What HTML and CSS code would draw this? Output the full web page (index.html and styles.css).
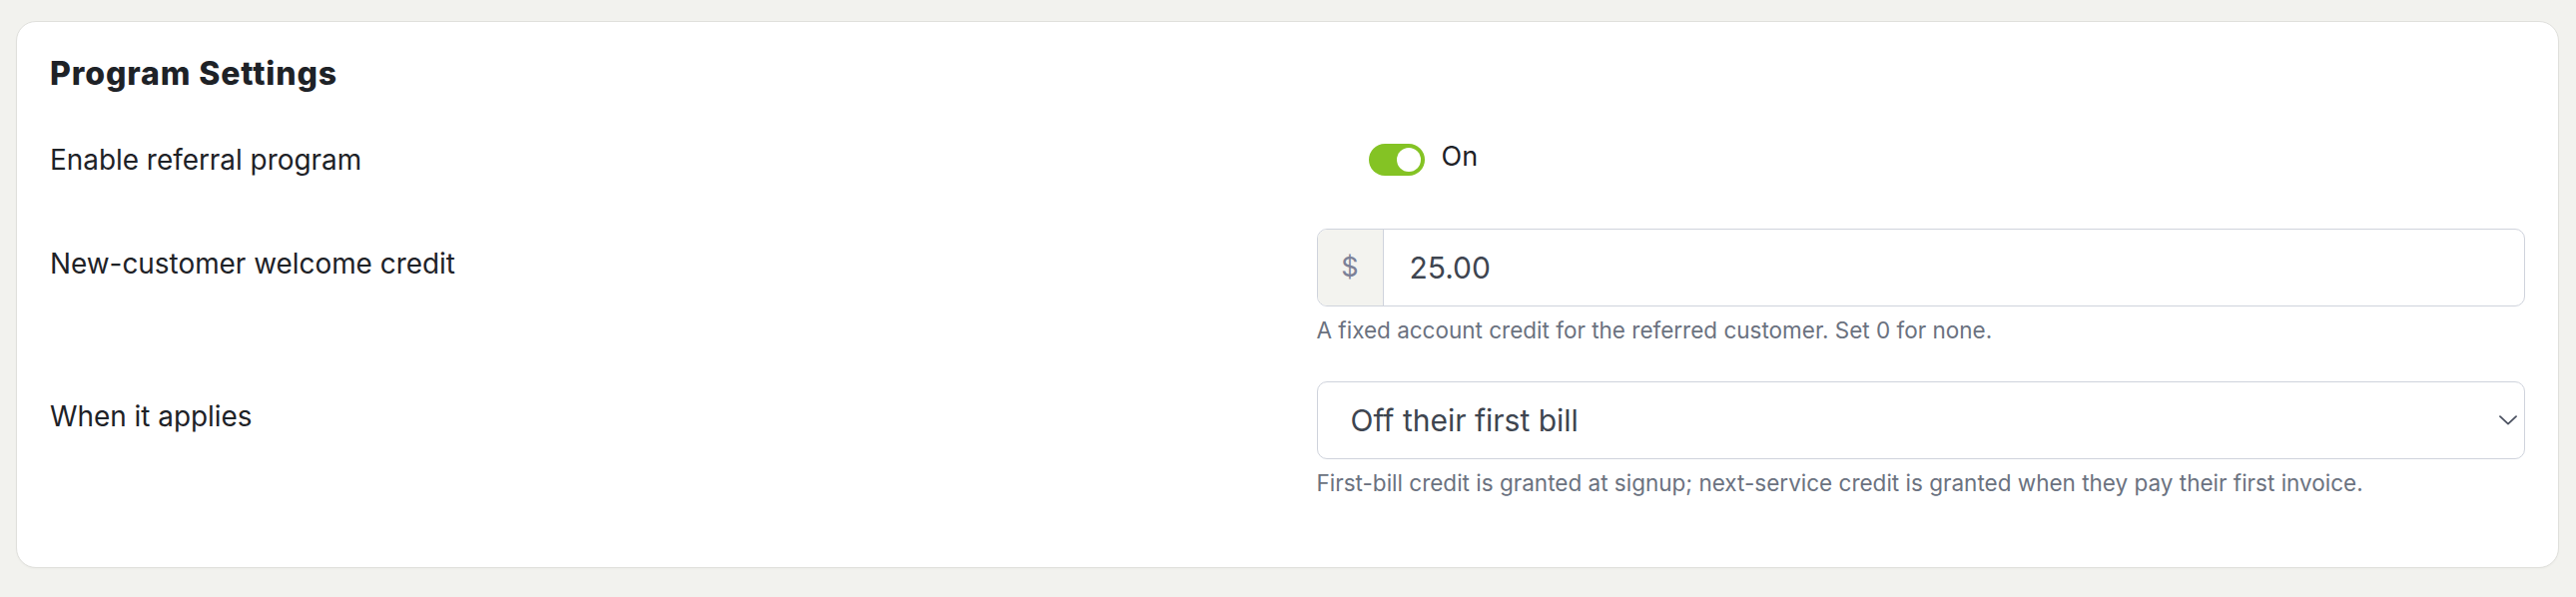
FILE: index.html
```html
<!DOCTYPE html>
<html lang="en">
<head>
<meta charset="utf-8">
<title>Program Settings</title>
<link rel="stylesheet" href="styles.css">
</head>
<body>
<section class="card">
  <h2 class="card-title">Program Settings</h2>
  <div class="rows">
    <div class="row">
      <div class="label">Enable referral program</div>
      <div class="control control-toggle">
        <span class="switch"><span class="knob"></span></span>
        <span class="switch-text">On</span>
      </div>
    </div>
    <div class="row">
      <div class="label">New-customer welcome credit</div>
      <div class="control">
        <div class="input-group">
          <span class="prefix">$</span>
          <span class="input-value">25.00</span>
        </div>
        <p class="help">A fixed account credit for the referred customer. Set 0 for none.</p>
      </div>
    </div>
    <div class="row">
      <div class="label">When it applies</div>
      <div class="control">
        <div class="select">
          <span class="select-value">Off their first bill</span>
          <svg class="chevron" width="18" height="10" viewBox="0 0 18 10" aria-hidden="true"><path d="M1 1.2 L9 8.6 L17 1.2" fill="none" stroke="#4b5160" stroke-width="1.8" stroke-linecap="round" stroke-linejoin="round"/></svg>
        </div>
        <p class="help">First-bill credit is granted at signup; next-service credit is granted when they pay their first invoice.</p>
      </div>
    </div>
  </div>
</section>
</body>
</html>
```
FILE: styles.css
```css
* { box-sizing: border-box; }
html, body { margin: 0; }
body {
  background: #f2f2ee;
  padding: 21px 17px 0 16px;
  font-family: Inter, "Noto Sans", "Liberation Sans", sans-serif;
  color: #1e2227;
  height: 598px;
  overflow: hidden;
}
.card {
  background: #ffffff;
  border: 1.5px solid #e0e0dc;
  border-radius: 20px;
  padding: 33px 33px 67px 33px;
  box-shadow: 0 1px 2px rgba(0,0,0,0.03);
}
.card-title {
  margin: 0 0 33px 0;
  font-size: 32px;
  line-height: 37px;
  font-weight: 800;
  letter-spacing: 0.9px;
  color: #1e2227;
}
.rows {
  display: flex;
  flex-direction: column;
  gap: 34px;
}
.row {
  display: grid;
  grid-template-columns: 1fr 1fr;
  column-gap: 58px;
  align-items: start;
}
.label {
  padding-top: 15px;
  font-size: 27.9px;
  line-height: 40px;
  color: #1e2227;
}
.control-toggle {
  min-height: 70px;
  display: flex;
  align-items: center;
  padding-left: 52px;
  gap: 17px;
}
.switch {
  width: 56px;
  height: 32px;
  border-radius: 16px;
  background: #84c324;
  display: flex;
  align-items: center;
  justify-content: flex-end;
  padding: 0 4px;
}
.knob {
  width: 24px;
  height: 24px;
  border-radius: 50%;
  background: #ffffff;
}
.switch-text {
  font-size: 27px;
  line-height: 27px;
  padding-bottom: 7px;
  color: #1e2227;
}
.input-group {
  display: flex;
  height: 78px;
  border: 1.5px solid #cfd3dc;
  border-radius: 10px;
  overflow: hidden;
}
.prefix {
  width: 66px;
  flex: none;
  display: flex;
  align-items: center;
  justify-content: center;
  background: #f3f3ef;
  border-right: 1.5px solid #cfd3dc;
  color: #7c8198;
  font-size: 27px;
  padding-bottom: 2px;
}
.input-value {
  display: flex;
  align-items: center;
  padding-left: 26px;
  font-size: 30px;
  color: #3e4550;
}
.help {
  margin: 6px 0 0 0;
  font-size: 22.5px;
  line-height: 35px;
  color: #6b7280;
}
.select {
  position: relative;
  display: flex;
  align-items: center;
  height: 78px;
  border: 1.5px solid #cfd3dc;
  border-radius: 10px;
  padding-left: 33px;
}
.select-value {
  font-size: 30px;
  color: #3e4550;
}
.chevron {
  position: absolute;
  right: 7px;
  top: 33px;
}
```
